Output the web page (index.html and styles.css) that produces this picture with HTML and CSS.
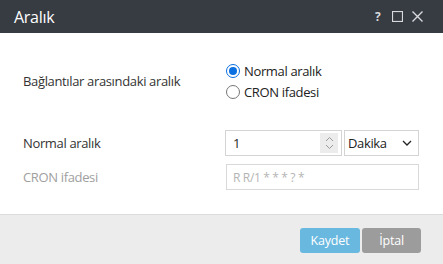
FILE: index.html
```html
<!DOCTYPE html>
<html lang="tr">
<head>
  <meta charset="UTF-8" />
  <title>Aralık</title>
  <link rel="stylesheet" href="styles.css">
</head>
<body>
  <div class="dialog">
    <div class="titlebar">
      <span class="title">Aralık</span>
      <div class="tools">
        <span class="tool help">?</span>
        <svg class="tool" width="11" height="11" viewBox="0 0 11 11"><rect x="0.5" y="0.5" width="10" height="10" fill="none" stroke="#d8dadd" stroke-width="1.2"/></svg>
        <svg class="tool" width="11" height="11" viewBox="0 0 11 11"><path d="M0.5 0.5 L10.5 10.5 M10.5 0.5 L0.5 10.5" stroke="#d8dadd" stroke-width="1.4"/></svg>
      </div>
    </div>

    <div class="content">
      <div class="row row-mode">
        <label class="field-label">Bağlantılar arasındaki aralık</label>
        <div class="radios">
          <label class="radio"><span class="dot checked"></span>Normal aralık</label>
          <label class="radio"><span class="dot"></span>CRON ifadesi</label>
        </div>
      </div>

      <div class="row row-normal">
        <label class="field-label">Normal aralık</label>
        <div class="controls">
          <div class="number">
            <span class="value">1</span>
            <span class="spin">
              <svg width="9" height="14" viewBox="0 0 9 14"><path d="M1 5 L4.5 1.5 L8 5" fill="none" stroke="#9a9a9a" stroke-width="1"/><path d="M1 9 L4.5 12.5 L8 9" fill="none" stroke="#9a9a9a" stroke-width="1"/></svg>
            </span>
          </div>
          <div class="select">
            <span>Dakika</span>
            <svg width="10" height="6" viewBox="0 0 10 6"><path d="M1 1 L5 5 L9 1" fill="none" stroke="#222" stroke-width="1.3"/></svg>
          </div>
        </div>
      </div>

      <div class="row row-cron">
        <label class="field-label muted">CRON ifadesi</label>
        <div class="cron">R R/1 * * * ? *</div>
      </div>
    </div>

    <div class="footer">
      <button class="btn btn-save">Kaydet</button>
      <button class="btn btn-cancel">İptal</button>
    </div>
  </div>
</body>
</html>
```

FILE: styles.css
```css
* {
  margin: 0;
  padding: 0;
  box-sizing: border-box;
}

body, html {
  width: 443px;
  height: 264px;
  overflow: hidden;
  font-family: 'Open Sans', 'Noto Sans', sans-serif;
  background: #ffffff;
}

.dialog {
  width: 443px;
  height: 264px;
  display: flex;
  flex-direction: column;
}

.titlebar {
  height: 33px;
  background: #373b42;
  display: flex;
  align-items: center;
  justify-content: space-between;
  padding: 0 20px 0 14px;
}

.title {
  color: #ffffff;
  font-size: 16px;
  letter-spacing: -0.3px;
}

.tools {
  display: flex;
  align-items: center;
  gap: 9px;
}

.help {
  color: #d8dadd;
  font-size: 12px;
  font-weight: bold;
  width: 7px;
  margin-right: 1px;
}

.content {
  flex: 1;
  padding: 28px 24px 0 23px;
  font-size: 13px;
  letter-spacing: -0.35px;
  color: #333333;
}

.row {
  display: flex;
  align-items: center;
}

.field-label {
  width: 203px;
}

.muted {
  color: #a0a0a0;
}

.radios {
  display: flex;
  flex-direction: column;
  gap: 2px;
}

.radio {
  display: flex;
  align-items: center;
  gap: 4px;
  height: 19px;
  color: #222222;
}

.dot {
  width: 14px;
  height: 14px;
  border-radius: 50%;
  border: 1px solid #767676;
  background: #ffffff;
  display: inline-flex;
  align-items: center;
  justify-content: center;
}

.dot.checked {
  border: 1px solid #0a6fe0;
}

.dot.checked::after {
  content: '';
  width: 8px;
  height: 8px;
  border-radius: 50%;
  background: #0a6fe0;
}

.row-normal {
  margin-top: 29px;
}

.controls {
  display: flex;
  gap: 2px;
}

.number {
  width: 117px;
  height: 26px;
  border: 1px solid #d4d4d4;
  display: flex;
  align-items: center;
  justify-content: space-between;
  padding: 0 3px 0 7px;
  color: #222222;
}

.spin {
  width: 18px;
  height: 20px;
  background: #ececec;
  display: flex;
  align-items: center;
  justify-content: center;
}

.select {
  width: 75px;
  height: 26px;
  border: 1px solid #d4d4d4;
  display: flex;
  align-items: center;
  justify-content: space-between;
  padding: 0 6px 0 3px;
  color: #222222;
}

.row-cron {
  margin-top: 8px;
}

.cron {
  width: 193px;
  height: 26px;
  border: 1px solid #d9d9d9;
  display: flex;
  align-items: center;
  padding: 0 6px;
  font-size: 12px;
  color: #b4b4b4;
}

.footer {
  height: 50px;
  background: #ececec;
  border-top: 1px solid #dcdcdc;
  display: flex;
  justify-content: flex-end;
  align-items: flex-start;
  gap: 2px;
  padding: 13px 22px 0 0;
}

.btn {
  height: 25px;
  border: none;
  border-radius: 3px;
  color: #ffffff;
  font-family: 'Open Sans', 'Noto Sans', sans-serif;
  font-size: 12.5px;
  letter-spacing: -0.2px;
  cursor: pointer;
}

.btn-save {
  width: 60px;
  background: #68b8e0;
}

.btn-cancel {
  width: 59px;
  background: #9c9c9c;
}
```
